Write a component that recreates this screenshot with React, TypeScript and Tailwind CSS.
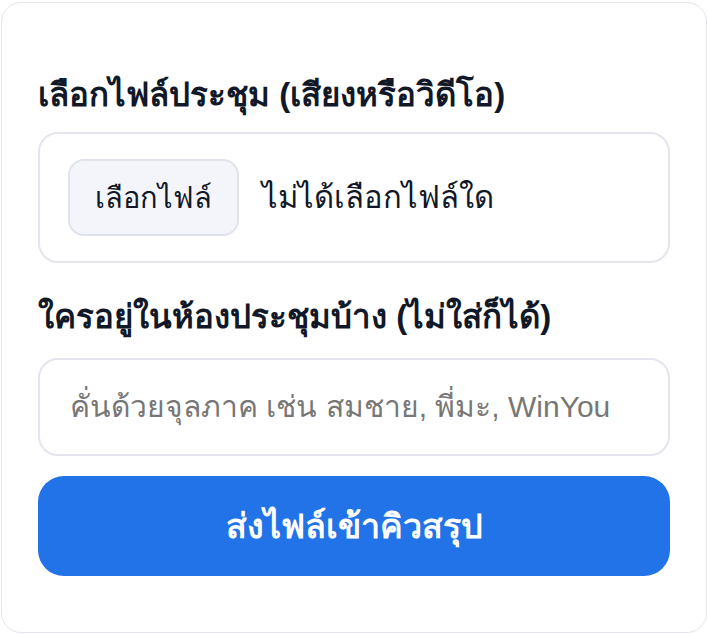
import { useState } from 'react';

const App = () => {
  const [fileName, setFileName] = useState('');
  const [attendees, setAttendees] = useState('');

  const handleFile = (e: React.ChangeEvent<HTMLInputElement>): void => {
    const file = e.target.files?.[0];
    setFileName(file ? file.name : '');
  };

  return (
    <div className="min-h-screen bg-white pl-px pt-[2px] font-['Liberation_Sans',sans-serif]">
      <div className="w-[706px] h-[631px] rounded-[20px] border border-[#e4e5ee] bg-white px-[36px] pt-[72px]">
        <label htmlFor="meeting-file" className="block text-[33px] font-bold leading-[40px] text-[#111827]">
          เลือกไฟล์ประชุม (เสียงหรือวิดีโอ)
        </label>
        <div className="mt-[17px] flex h-[131px] items-center rounded-[20px] border-2 border-[#e4e5ee] px-[28px]">
          <label
            htmlFor="meeting-file"
            className="flex h-[77px] w-[171px] cursor-pointer items-center justify-center rounded-[16px] border-2 border-[#e0e3ec] bg-[#f4f5fa] text-[29px] leading-[40px] text-[#111827]"
          >
            เลือกไฟล์
          </label>
          <span className="ml-[23px] text-[31px] leading-[40px] text-[#111827]">
            {fileName || 'ไม่ได้เลือกไฟล์ใด'}
          </span>
          <input id="meeting-file" type="file" accept="audio/*,video/*" className="hidden" onChange={handleFile} />
        </div>

        <label htmlFor="attendees" className="mt-[34px] block text-[33px] font-bold leading-[40px] text-[#111827]">
          ใครอยู่ในห้องประชุมบ้าง (ไม่ใส่ก็ได้)
        </label>
        <input
          id="attendees"
          value={attendees}
          onChange={(e) => setAttendees(e.target.value)}
          placeholder="คั่นด้วยจุลภาค เช่น สมชาย, พี่มะ, WinYou"
          className="mt-[21px] block h-[98px] w-full rounded-[20px] border-2 border-[#e4e5ee] px-[30px] text-[30px] text-[#111827] placeholder:text-[#777777] outline-none"
        />

        <button className="mt-[20px] flex h-[100px] w-full items-center justify-center rounded-[26px] bg-[#2272e8] text-[34px] font-bold leading-[40px] text-white">
          ส่งไฟล์เข้าคิวสรุป
        </button>
      </div>
    </div>
  );
};

export default App;
